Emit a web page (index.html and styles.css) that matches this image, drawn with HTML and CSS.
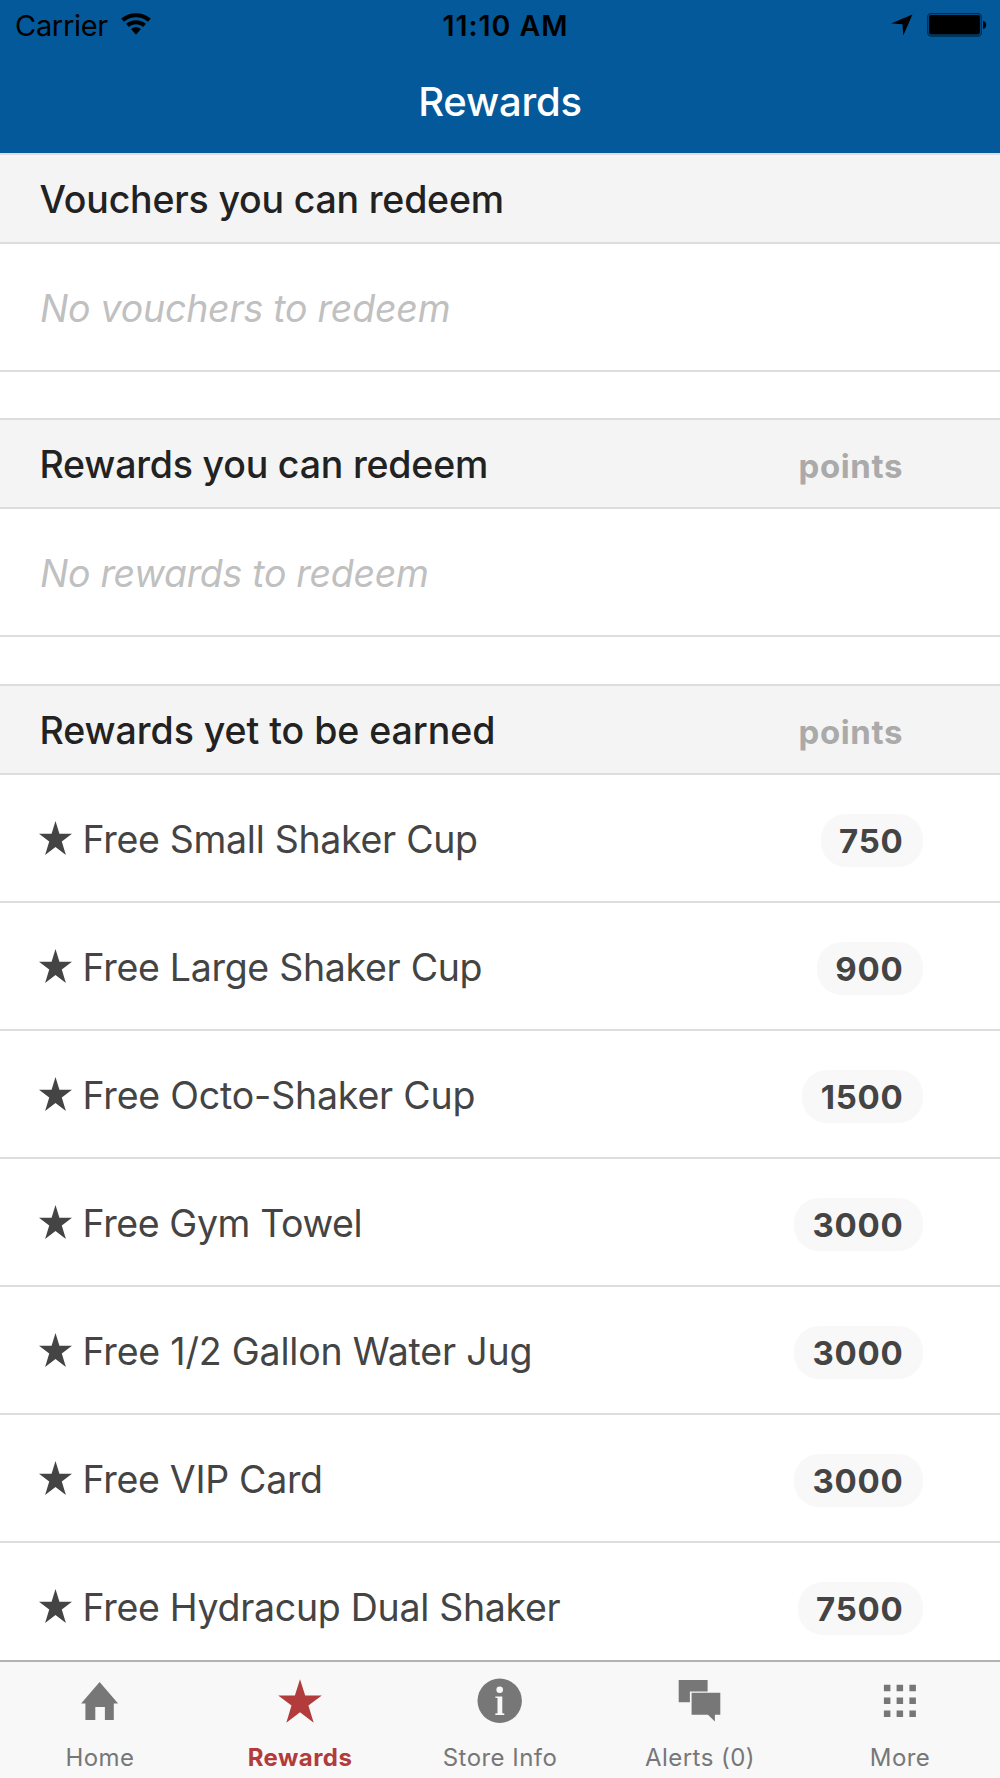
FILE: index.html
```html
<!DOCTYPE html>
<html lang="en">
<head>
<meta charset="utf-8">
<title>Rewards</title>
<link rel="stylesheet" href="styles.css">
</head>
<body>
<svg class="defs" width="0" height="0" aria-hidden="true">
  <symbol id="star" viewBox="0 0 32 33"><path d="M16 0l3.800 12.400H32l-9.900 7.600L26.100 33 16 25.200 5.900 33l4-13L0 12.400h12.200z"/></symbol>
</svg>
<div class="app">
  <header class="topbar">
    <div class="status">
      <div class="status-left"><span class="carrier">Carrier</span>
        <svg class="wifi" viewBox="0 0 30 22" width="30" height="22"><path d="M.2 5.600C8.600-1.600 21.400-1.600 29.800 5.600L27 8.700C20 2.900 10 2.900 3 8.700zM5.100 10.800c5.700-4.900 14.100-4.900 19.800 0l-2.800 3.100c-4.100-3.400-10.100-3.400-14.200 0zM10.100 16.100c2.800-2.400 7-2.400 9.800 0L15 21.700z"/></svg>
      </div>
      <div class="clock">11:10 AM</div>
      <div class="status-right">
        <svg class="locate" viewBox="0 0 22 22" width="22" height="22"><path d="M21.400.4L12.300 21.400 11.500 10.300 0 9.500z"/></svg>
        <svg class="battery" viewBox="0 0 60 24" width="60" height="24"><rect x=".7" y=".7" width="53.600" height="22.300" rx="3.500" fill="none" stroke="#002a4a" stroke-width="1.300"/><rect x="2.100" y="2" width="50.800" height="19.600" rx="1.800"/><path d="M56 8c4.300.6 4.300 7.400 0 8z"/></svg>
      </div>
    </div>
    <h1 class="title">Rewards</h1>
  </header>
  <main class="content">
    <section class="group">
      <div class="heading"><h2>Vouchers you can redeem</h2></div>
      <div class="row"><span class="empty">No vouchers to redeem</span></div>
    </section>
    <section class="group">
      <div class="heading"><h2>Rewards you can redeem</h2><span class="unit">points</span></div>
      <div class="row"><span class="empty tight">No rewards to redeem</span></div>
    </section>
    <section class="group">
      <div class="heading"><h2 class="loose">Rewards yet to be earned</h2><span class="unit">points</span></div>
      <div class="row"><svg class="star"><use href="#star"/></svg><span class="name">Free Small Shaker Cup</span><span class="badge">750</span></div>
      <div class="row"><svg class="star"><use href="#star"/></svg><span class="name">Free Large Shaker Cup</span><span class="badge">900</span></div>
      <div class="row"><svg class="star"><use href="#star"/></svg><span class="name loose">Free Octo-Shaker Cup</span><span class="badge">1500</span></div>
      <div class="row"><svg class="star"><use href="#star"/></svg><span class="name tight">Free Gym Towel</span><span class="badge">3000</span></div>
      <div class="row"><svg class="star"><use href="#star"/></svg><span class="name loose">Free 1/2 Gallon Water Jug</span><span class="badge">3000</span></div>
      <div class="row"><svg class="star"><use href="#star"/></svg><span class="name">Free VIP Card</span><span class="badge">3000</span></div>
      <div class="row"><svg class="star"><use href="#star"/></svg><span class="name">Free Hydracup Dual Shaker</span><span class="badge">7500</span></div>
    </section>
  </main>
  <nav class="tabs">
    <div class="tab"><svg width="46" height="46" viewBox="0 0 46 46"><path d="M22.600 5l18.500 21.600h-4.300V43H27.900V30h-9.600v13H8.400V26.600H4.100z"/></svg><span>Home</span></div>
    <div class="tab active"><svg width="46" height="46" viewBox="0 0 46 46"><path d="M23 2.300l5.200 16.100h16.600L31.400 28.400l5.300 17.300L23 35.300 9.300 45.700l5.200-17.300L1.200 18.400h16.700z"/></svg><span>Rewards</span></div>
    <div class="tab"><svg width="46" height="46" viewBox="0 0 46 46"><circle cx="22.700" cy="23.700" r="22.200"/><g fill="#f8f8f8"><circle cx="22.700" cy="12.700" r="3.300"/><path d="M18.300 19.500h7v16.800l2 .3v1.300h-9v-1.300l2.200-.3V21.100l-2.200-.3z"/></g></svg><span>Store Info</span></div>
    <div class="tab"><svg width="46" height="46" viewBox="0 0 46 46"><path d="M1.700 3h28.900v11.500H12.900v10.800H1.700zM14.600 15.800h28.700v22H37.900v6.800l-7-6.800H14.600z"/></svg><span>Alerts (0)</span></div>
    <div class="tab"><svg width="46" height="46" viewBox="0 0 46 46"><path d="M6.900 7.700h6.500v6.500H6.900zM19.600 7.700h6.500v6.500h-6.500zM32.400 7.700h6.500v6.500h-6.500zM6.900 20.500h6.500V27H6.900zM19.600 20.500h6.500V27h-6.500zM32.400 20.500h6.500V27h-6.500zM6.900 33.500h6.500V40H6.900zM19.600 33.500h6.500V40h-6.500zM32.400 33.500h6.500V40h-6.500z"/></svg><span>More</span></div>
  </nav>
</div>
</body>
</html>
```
FILE: styles.css
```css
* { box-sizing: border-box; }
body { margin: 0; font-family: Inter, "Liberation Sans", sans-serif; background: #fff; }
h1, h2 { margin: 0; font-weight: 500; }
.defs { display: block; }
.app { display: flex; flex-direction: column; height: 1778px; overflow: hidden; }
.topbar { flex: none; height: 153px; background: #035999; }
.status { display: grid; grid-template-columns: 1fr auto 1fr; align-items: center; height: 50px; padding: 0 13px 0 15px; }
.status-left { display: flex; align-items: center; gap: 13px; }
.status-right { display: flex; align-items: center; justify-content: flex-end; gap: 14px; }
.wifi { margin-top: -3px; }
.carrier { font-size: 29px; letter-spacing: -.3px; }
.clock { font-size: 28.500px; font-weight: 600; letter-spacing: 1px; padding-left: 9px; }
.title { height: 103px; line-height: 103px; color: #fff; font-size: 40px; letter-spacing: -.2px; text-align: center; }
.content { flex: 1; min-height: 0; overflow: hidden; }
.group { margin-bottom: 46.800px; }
.group:first-child { margin-bottom: 46.400px; }
.heading { display: flex; align-items: center; justify-content: space-between; height: 91px; padding: 2px 97px 0 39.500px; background: #f4f4f4; border: solid #ddd; border-width: 2px 0; }
.heading h2 { font-size: 37.500px; letter-spacing: -.2px; color: #222; }
.heading h2.loose { letter-spacing: -.05px; }
.unit { font-size: 33px; font-weight: 700; letter-spacing: .6px; color: #aaa; padding-top: 3px; }
.row { display: flex; align-items: center; height: 128px; padding: 3px 77px 0 39px; border-bottom: 2px solid #ddd; }
.empty { font-size: 37.500px; font-style: italic; letter-spacing: -.23px; color: #c0c0c0; padding-left: 1px; }
.empty.tight { letter-spacing: -.3px; }
.star { width: 33px; height: 34px; fill: #444; margin: 0 10.500px 3px 0; flex: none; }
.name { font-size: 37.500px; letter-spacing: -.3px; color: #444; flex: 1; }
.name.loose { letter-spacing: -.19px; }
.name.tight { letter-spacing: -.4px; }
.badge { height: 53px; line-height: 54px; margin-top: 1px; padding: 0 19.500px 0 18.500px; border-radius: 25px; background: #f8f8f8; color: #444; font-size: 33px; font-weight: 700; letter-spacing: .75px; }
.tabs { flex: none; height: 118px; display: grid; grid-template-columns: repeat(5, 1fr); background: #f8f8f8; border-top: 2px solid #b2b2b2; }
.tab { display: flex; flex-direction: column; align-items: center; padding-top: 15px; gap: 18px; color: #777; fill: #777; font-size: 24px; line-height: 34px; letter-spacing: .45px; }
.active { color: #b23b3b; fill: #b23b3b; font-weight: 700; }
```
